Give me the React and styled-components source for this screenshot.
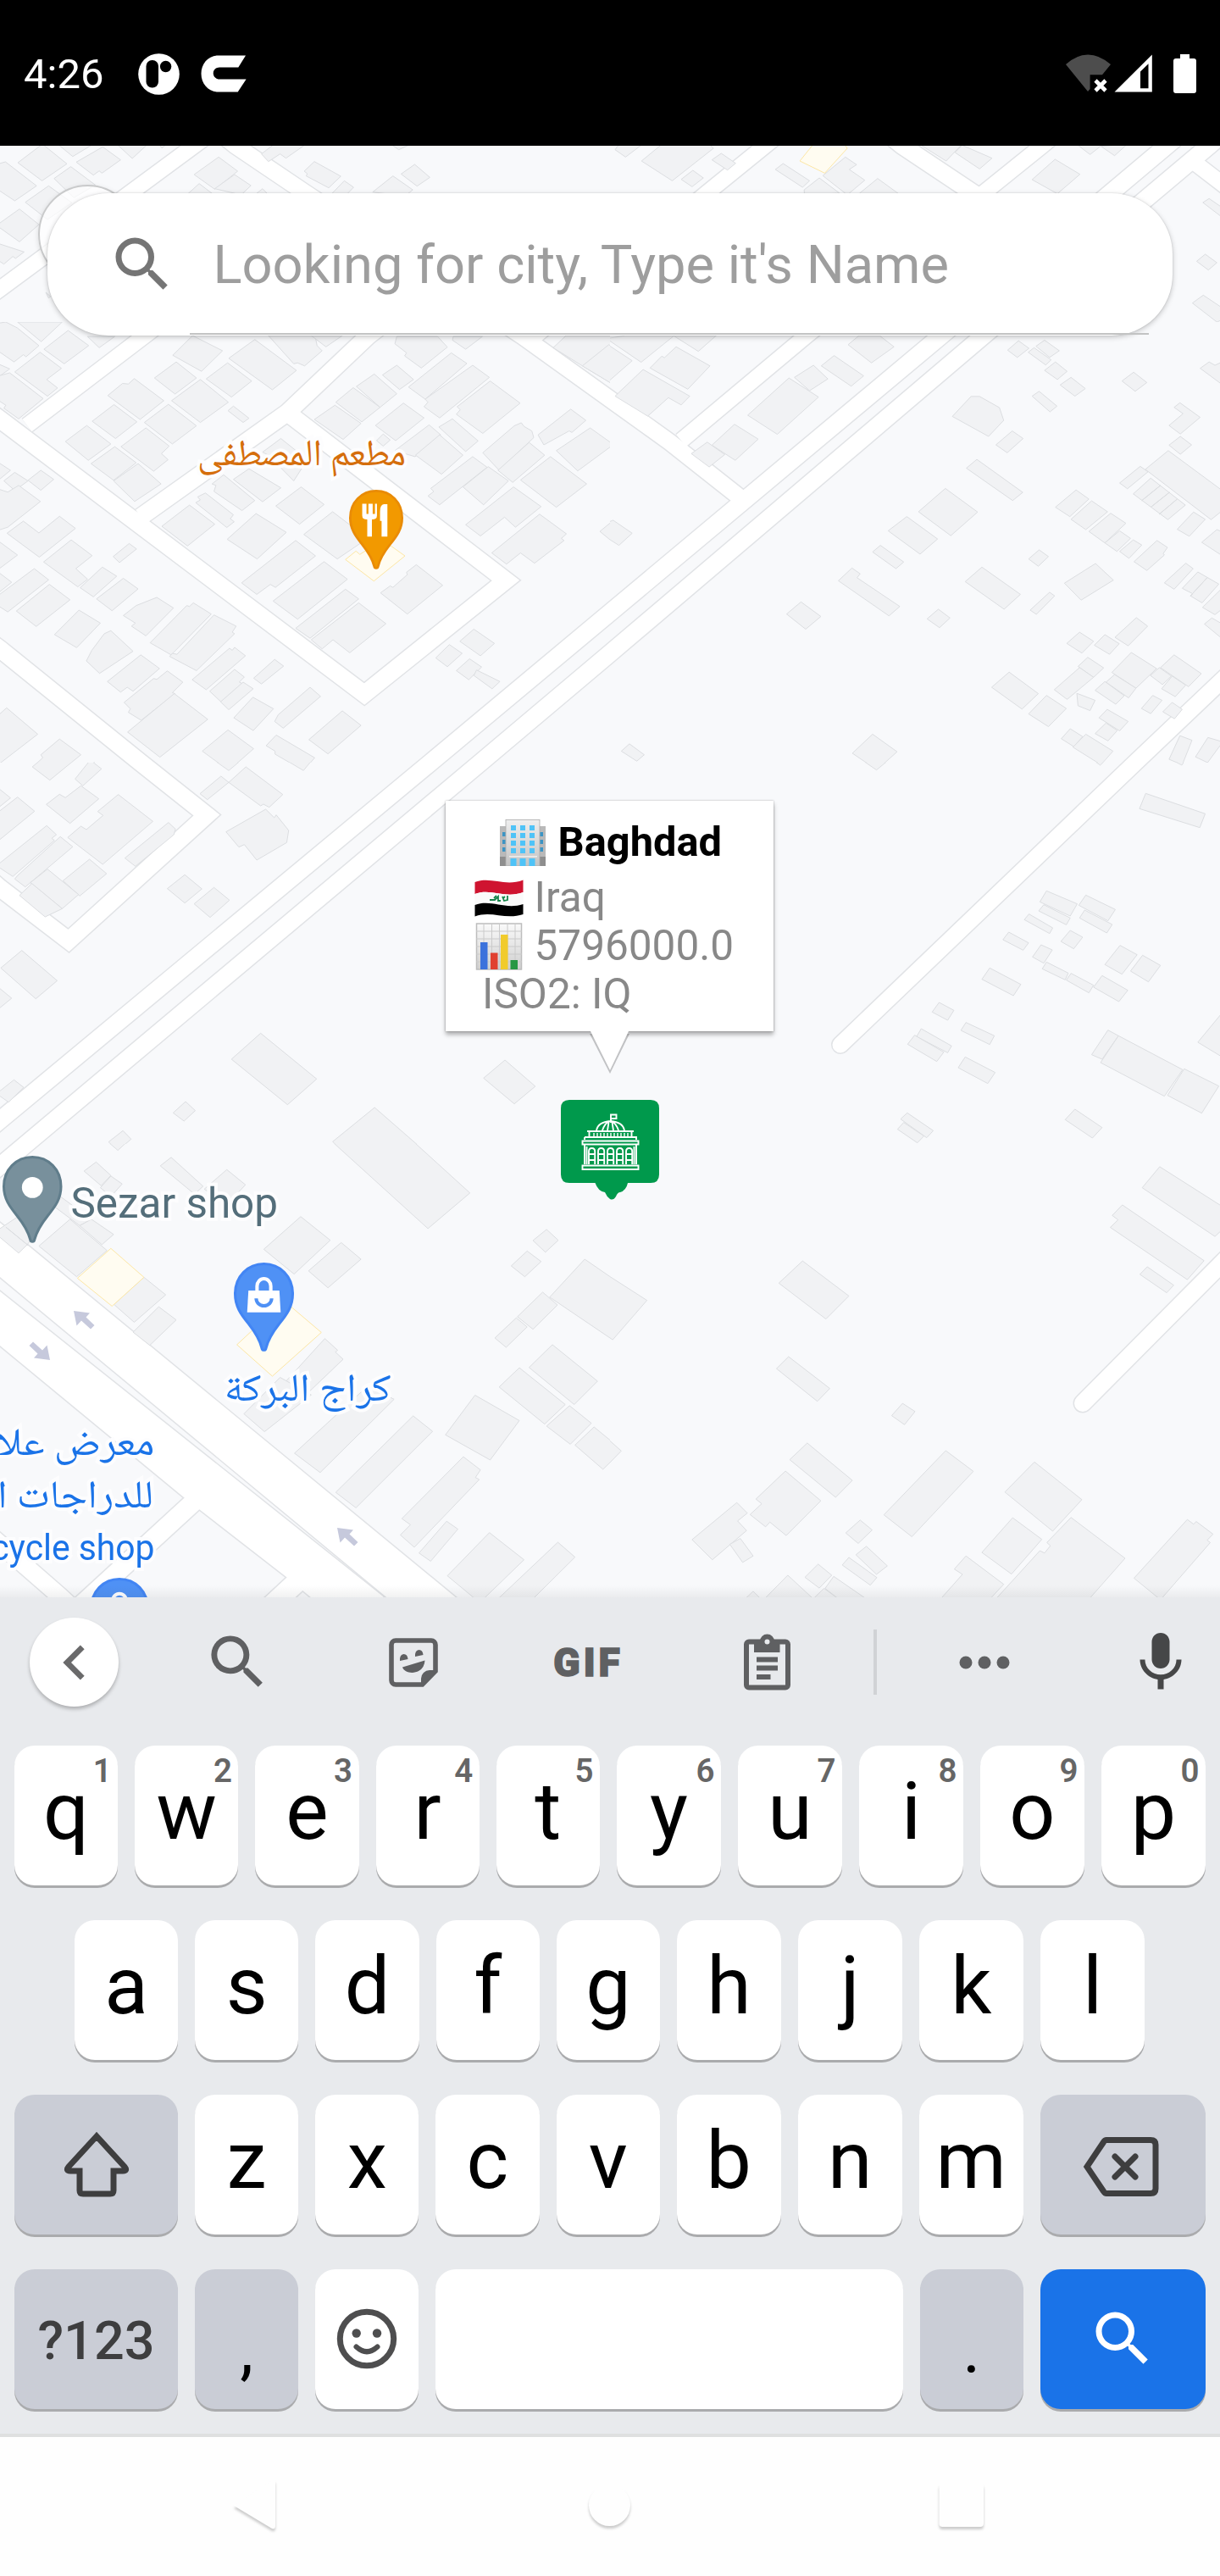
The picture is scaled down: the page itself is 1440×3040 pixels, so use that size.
import React from "react";
import styled, { createGlobalStyle } from "styled-components";

const GlobalStyle = createGlobalStyle`
  *, *::before, *::after { box-sizing: border-box; }
  html, body { margin: 0; padding: 0; background: #fefefe; }
  body { width: 1440px; font-family: Roboto, "Noto Sans", sans-serif; }
  svg { display: block; }
`;

const Screen = styled.main`
  display: flex;
  flex-direction: column;
  width: 1440px;
  height: 3040px;
  overflow: hidden;
`;

/* ---------- status bar ---------- */

const StatusBar = styled.header`
  display: flex;
  align-items: center;
  flex: none;
  height: 172px;
  padding: 2px 28px 0 28px;
  background: #000;
`;

const Clock = styled.span`
  width: 135px;
  padding-top: 2px;
  font-size: 49px;
  line-height: 58px;
  color: #fff;
`;

const StatusGroup = styled.div`
  display: flex;
  align-items: center;
  gap: ${(p) => p.$gap}px;
  margin-left: ${(p) => (p.$end ? "auto" : "0")};
`;

function StatusIcons() {
  return (
    <>
      <StatusGroup $gap={25}>
        <svg width="49" height="49" viewBox="0 0 49 49">
          <circle cx="24.5" cy="24.5" r="24.3" fill="#fff" />
          <rect x="9.5" y="8" width="14.5" height="32.5" rx="7" fill="#000" />
          <circle cx="32.6" cy="15.5" r="6.7" fill="#000" />
        </svg>
        <svg width="54" height="44" viewBox="0 0 54 44">
          <path
            d="M53 0.500H21C9 0.500 0.500 10 0.500 22s8.500 21.500 20.500 21.500h22.700L53.600 28.500H22c-4 0-7.300-3-7.300-7s3.300-7 7.300-7h22.300z"
            fill="#fff"
          />
        </svg>
      </StatusGroup>
      <StatusGroup $end $gap={0}>
        <svg width="155" height="48" viewBox="1257 62 155 48">
          <path d="M1284 107L1258 75Q1284 52 1311 75L1301 87.300H1286.600V104z" fill="#4d4d4d" />
          <path d="M1293 94l12 12M1305 94l-12 12" stroke="#fff" strokeWidth="4.600" />
          <path
            d="M1315.500 107.600L1359.800 63.500V107.600zM1346 83.500V103.300H1355.500V74.300z"
            fill="#fff"
            fillRule="evenodd"
          />
          <path
            d="M1393 63H1404V68H1409a3 3 0 0 1 3 3V106a3 3 0 0 1-3 3H1388a3 3 0 0 1-3-3V71a3 3 0 0 1 3-3H1393z"
            fill="#fff"
          />
        </svg>
      </StatusGroup>
    </>
  );
}

/* ---------- map ---------- */

const MapArea = styled.section`
  position: relative;
  flex: none;
  height: 1713px;
  overflow: hidden;
  background: #f8f9fb;

  &::after {
    content: "";
    position: absolute;
    left: 0;
    right: 0;
    bottom: 0;
    height: 14px;
    background: linear-gradient(rgba(60, 64, 67, 0), rgba(60, 64, 67, 0.07));
  }
`;

/* Roads with a centre line: [points, width, join, cap] */
const ROADS = [
  ["-40,371 0,341 229,172 270,142", 18, "miter"],
  ["232,135 278,172 361,228 617,397 720,471 791,522 872,586", 19, "miter"],
  ["375,240 171,396 32,502", 18, "miter"],
  ["520,330 435,396 339,487 166,610", 20, "miter"],
  ["-30,472 0,495 430,819 597,685 339,487", 20, "miter"],
  ["-30,744 0,766 166,900 244,962 81,1110 0,1048 -30,1022", 20, "miter"],
  ["1000,119 1065,172 1152,230", 20, "miter"],
  ["1290,122 1230,172 952,396 804,520", 18, "miter"],
  ["940,142 903,172 834,228 625,402", 18, "miter"],
  ["-40,1355 0,1322 508,900 720,723 1111,396 1377,172 1420,136", 20, "miter"],
  ["-40,1409 0,1376 567,900 720,771 1161,396 1427,172 1460,144", 20, "miter"],
  ["1405,188 1470,238", 18, "miter"],
  ["1480,768 1440,805 1340,900 992,1233", 19, "miter", "round"],
  ["1480,1453 1440,1493 1278,1656", 20, "miter", "round"],
  ["240,1762 106,1885 70,1918", 22, "miter"],
  ["-30,1796 0,1822 70,1883 110,1920", 20, "miter"],
  ["360,1858 318,1897", 24, "miter"],
];

const CARRIAGEWAYS = [
  "-10,1435 0,1443 32,1469 545,1891 460,1888 0,1507 -10,1499",
  "-10,1516 0,1524 452,1884 460,1900 385,1900 338,1861 217,1767 0,1588 -10,1580",
];

/* Building footprints, one sheet per map tile. */
const TILES = [
  {
    x: 0, y: 0, w: 720, h: 208, box: "0 516 1568 624",
    plots: [
      "109,510 172,580 108,640 46,576", "148,510 240,510 187,554", "300,510 380,510 340,561", "408,510 430,510 416,524",
      "264,520 310,566 262,613 255,605 240,620 196,574", "-9,582 14,573 94,658 38,711 -9,668", "182,590 245,655 190,700 139,632",
      "125,658 185,718 122,777 65,716", "50,740 100,795 50,856 -9,798", "-9,860 62,892 40,915 33,908 10,935 -9,918", "118,1035 130,1050 125,1055",
      "562,556 611,606 552,670 499,618", "603,618 645,657 620,690 552,668", "512,650 550,690 480,690", "675,668 690,690 655,690",
      "672,545 705,510 787,510 735,560 720,545 690,572", "1004,510 1057,510 1025,530", "808,572 876,624 845,665 787,623 790,615 782,606",
      "885,640 909,663 890,690 850,690", "1066,582 1105,628 1072,659 1031,616", "1010,623 1061,672 1045,690 1015,690 958,680",
    ],
    yards: [],
  },
  {
    x: 720, y: 0, w: 720, h: 208, box: "0 516 1568 624",
    plots: [
      "24,510 84,510 40,556 13,530", "134,510 255,510 266,525 160,640 81,570", "286,543 323,578 302,602 262,566",
      "213,603 240,630 211,661 183,635", "445,579 513,640 495,663 425,600", "605,556 634,583 615,600 655,638 610,690 547,622",
      "538,630 590,684 500,690 499,672", "688,632 742,686 640,686", "795,510 905,510 864,570", "905,514 982,560 950,598 887,540",
      "1199,510 1268,510 1234,547", "1262,518 1330,510 1297,551", "1144,564 1208,617 1150,686 1085,636",
      "1540,703 1577,738 1577,773 1524,717", "1530,900 1560,930 1538,956 1508,925", "1525,1045 1577,1093 1577,1130 1560,1140 1497,1073",
    ],
    yards: ["523,510 602,510 610,525 552,613 488,570"],
  },
  {
    x: 0, y: 208, w: 720, h: 520, box: "0 0 1568 1456",
    plots: [
      "-9,5 15,0 45,20 100,78 67,115 60,108 36,132 -9,92", "45,0 160,0 106,65", "175,28 228,78 165,138 113,90", "225,48 295,48 255,85",
      "103,100 158,153 120,190 148,218 122,245 38,165", "-9,136 25,155 -9,186", "25,168 111,253 48,320 10,285 15,275 -9,255 -9,180",
      "495,45 572,95 518,163 444,110", "655,58 762,160 700,224 588,120", "690,45 810,45 815,78 828,95 783,145 765,135 755,138",
      "800,45 880,45 838,82", "453,132 505,185 450,238 397,185", "585,135 647,195 595,248 530,188", "515,190 587,265 515,332 441,260",
      "600,278 640,318 625,332 586,293", "345,187 421,260 360,322 277,243 315,203 330,205", "293,273 352,330 297,385 237,328",
      "433,272 505,343 443,403 371,332", "223,342 285,403 227,457 168,395", "375,350 435,410 415,435 432,455 395,493 311,412",
      "295,412 350,465 292,523 234,468", "355,468 414,535 346,593 292,525", "-9,460 27,490 -9,528", "38,497 72,525 38,557 10,525",
      "105,490 138,520 105,556 72,523", "-9,550 20,562 48,540 104,593 20,678 -9,690", "60,658 100,697 153,642 194,682 101,777 18,698",
      "-9,719 45,770 -9,822", "183,720 237,772 195,815 225,850 200,875 112,793", "332,732 351,750 307,795 291,775",
      "88,815 125,852 20,958 -9,934 -9,908", "-9,822 30,860 -9,900", "263,810 300,840 240,908 206,878", "317,847 355,882 288,954 248,915",
      "127,867 180,918 93,1006 42,955", "403,910 446,945 375,1037 338,1005 348,995 317,970 350,937", "203,952 258,995 197,1076 140,1033",
      "285,1020 342,1088 256,1161 222,1120 236,1085 268,1030", "497,928 543,965 440,1100 386,1060 480,937 487,940",
      "550,968 607,1005 597,1025 603,1030 505,1152 436,1105 443,1095 455,1098", "362,1100 410,1145 342,1220 327,1207 310,1223 276,1188",
      "603,1075 631,1103 530,1215 494,1182 590,1078 597,1085", "430,1153 470,1190 443,1225 450,1228 363,1316 330,1290 335,1278 319,1257 395,1178 403,1181",
      "448,1228 534,1313 411,1438 328,1355", "603,1148 628,1173 615,1190 625,1196 568,1255 539,1220", "625,1190 651,1212 588,1281 567,1255",
      "706,1115 729,1137 672,1196 652,1177", "650,1240 703,1278 651,1350 601,1308", "797,1207 824,1237 728,1342 706,1320 715,1298",
      "880,1285 928,1333 843,1427 794,1380", "586,1348 652,1410 588,1482 520,1418", "710,1365 809,1440 780,1482 707,1428 707,1418 684,1400",
      "-9,1305 17,1275 97,1362 -9,1467", "153,1378 208,1430 129,1513 84,1470 110,1440 105,1430", "242,1455 261,1475 213,1535 193,1512",
      "722,385 790,455 755,525 690,440 675,430", "575,505 655,590 622,623 550,560 555,540 545,535", "640,485 722,548 675,594 600,520",
      "528,565 600,637 592,650 602,660 583,679 503,597 515,588 508,578", "487,605 552,668 482,740 416,675", "774,545 833,603 770,668 709,608",
      "658,633 736,695 661,783 584,718", "855,627 945,715 867,783 781,702", "760,722 811,773 708,877 695,867 660,900 621,862",
      "833,792 893,850 765,982 702,922", "888,883 922,915 797,1045 760,1012", "922,928 992,997 899,1093 856,1050 828,1080 800,1050",
      "1070,802 1138,870 1047,965 978,895 1003,872 1010,877 1047,835 1045,827",
      "1020,48 1125,48 1150,83 1083,152 1040,112 1045,102 1015,72", "1165,48 1240,48 1197,90 1163,60", "1160,102 1200,137 1093,255 1050,215",
      "1020,143 1063,190 1027,223 983,175", "962,172 1020,237 977,282 916,213", "908,217 977,282 930,330 863,265",
      "861,275 928,335 882,388 808,322", "1037,268 1090,317 1017,392 965,342", "1215,143 1258,183 1130,317 1090,280 1100,265 1093,255",
      "1260,195 1337,268 1241,368 1173,305 1183,290 1175,280", "1163,320 1229,393 1197,428 1128,347", "1103,340 1133,373 1067,445 1015,425",
      "985,370 1003,390 985,410 968,392", "1130,373 1190,440 1135,503 1068,440", "1340,333 1347,345 1367,360 1372,382 1283,490 1241,432 1322,343",
      "1360,398 1400,440 1318,530 1280,490", "1467,288 1506,325 1470,365 1463,360 1398,406 1383,373", "1517,350 1577,405 1485,492 1430,425",
      "1415,445 1508,535 1430,612 1338,522", "1215,445 1252,480 1130,604 1100,575 1115,560 1107,550", "1255,478 1307,525 1243,604 1190,545",
      "1320,545 1391,610 1325,678 1297,645 1235,707 1197,670", "1387,635 1456,700 1443,715 1450,722 1374,797 1338,763 1302,800 1264,763",
      "1455,45 1577,45 1577,207 1497,145 1422,85", "1497,145 1565,75 1577,85 1577,207", "1577,655 1542,692 1577,729",
      "1218,1015 1271,1062 1235,1103 1182,1055", "1155,1066 1188,1095 1150,1139 1120,1110", "1207,1113 1238,1140 1205,1182 1173,1152",
      "1225,1150 1285,1188 1265,1212 1218,1168",
    ],
    yards: ["915,757 925,768 965,735 1005,740 1041,773 961,856 888,785"],
  },
  {
    x: 720, y: 208, w: 720, h: 520, box: "0 0 1568 1456",
    plots: [
      "-9,55 40,45 165,45 80,133", "-9,72 57,128 -9,202", "163,45 273,45 227,97", "170,82 257,145 200,222 103,152 133,113 140,118",
      "85,157 205,245 183,274 150,250 97,311 13,245", "612,75 640,45 693,45 730,82 672,135", "576,111 652,178 620,212 543,145",
      "523,143 560,188 513,227 474,183", "460,185 536,248 430,371 354,308", "320,338 381,387 322,457 262,407", "250,397 295,438 255,479 209,435",
      "1050,62 1077,87 1047,117 1022,93", "1117,60 1155,95 1130,117 1095,80", "1090,85 1134,125 1120,142 1075,100", "1145,132 1175,163 1150,190 1117,160",
      "1185,183 1222,220 1195,245 1157,208", "1103,229 1149,278 1131,297 1085,245", "1346,166 1380,200 1350,229 1316,195",
      "928,246 950,246 1001,283 1012,325 973,378 880,312", "1034,360 1062,385 1021,432 992,406", "943,454 1061,563 1035,590 916,483",
      "862,550 945,628 876,706 793,627", "763,643 842,717 797,767 715,690", "695,738 755,793 735,815 675,760",
      "622,813 643,832 635,845 745,940 717,971 587,855", "491,925 542,973 503,1015 454,965", "956,810 1055,900 1013,949 913,858",
      "1103,753 1127,775 1101,807 1076,783", "1248,798 1294,853 1211,919 1168,863", "1130,893 1143,905 1096,966 1080,952",
      "844,949 874,978 847,1010 815,981", "8,655 57,698 23,738 -9,712 -9,664", "50,1394 88,1430 69,1451 29,1418", "675,1362 738,1420 686,1480 623,1425",
      "1198,555 1231,585 1182,643 1145,612", "1238,591 1279,627 1223,686 1185,652", "1287,632 1326,665 1272,730 1231,692",
      "1310,690 1338,715 1303,758 1272,730", "1345,720 1367,737 1334,781 1310,758", "1406,722 1433,745 1422,765 1425,770 1380,821 1347,792",
      "1363,477 1383,495 1330,551 1310,532", "1390,516 1479,605 1434,653 1345,568", "1415,540 1367,590", "1438,563 1390,612", "1458,585 1412,635",
      "1435,425 1577,560 1577,620 1545,653 1376,487", "1466,378 1495,406 1466,437 1437,407", "1465,267 1517,315 1466,370 1437,342 1473,303 1450,282",
      "1540,132 1555,143 1577,130 1577,210 1517,153", "1500,628 1530,652 1489,708 1458,685", "1560,686 1577,695 1577,775 1521,728",
      "1480,797 1499,815 1450,883 1425,862", "1511,826 1565,866 1522,928 1492,905 1498,898 1471,880", "1535,845 1492,905",
      "1577,875 1523,943 1555,967 1577,945", "1547,978 1577,1000 1577,1050 1528,998", "1353,977 1382,1005 1332,1070 1298,1042",
      "1272,1033 1309,1063 1284,1098 1245,1068", "1207,1025 1243,1055 1213,1094 1174,1062", "1340,1092 1405,1145 1352,1210 1290,1158",
      "1297,1165 1352,1210 1333,1242 1275,1190", "1272,1188 1322,1235 1300,1263 1247,1217", "1228,1108 1269,1143 1243,1174 1203,1138",
      "1207,1142 1243,1174 1175,1247 1142,1215", "1026,1157 1101,1228 1059,1279 981,1207", "1122,1234 1173,1277 1127,1337 1076,1295",
      "1200,1227 1247,1250 1234,1284 1203,1268", "1278,1280 1332,1320 1310,1351 1257,1308", "1275,1325 1304,1350 1280,1384 1247,1360",
      "1183,1344 1215,1370 1192,1403 1160,1377", "1223,1362 1293,1418 1262,1463 1190,1405", "1450,1100 1520,1162 1487,1205 1415,1142",
      "1412,1142 1443,1170 1420,1198 1389,1168", "1445,1170 1480,1200 1453,1238 1418,1212", "1395,1234 1419,1250 1390,1294 1366,1277",
      "1445,1257 1471,1280 1451,1311 1421,1288", "1465,1367 1496,1382 1471,1463 1437,1445", "1537,1373 1577,1388 1568,1400 1536,1456 1505,1437",
    ],
    yards: [],
  },
  {
    x: 0, y: 728, w: 720, h: 450, box: "0 0 1568 1350",
    plots: [
      "83,15 104,-9 191,-9 128,62", "232,-9 261,22 213,82 193,58", "550,-9 620,-9 588,28", "735,-9 802,-9 780,28", "568,48 588,70 533,131 514,110",
      "632,15 727,113 692,158 677,147 670,153 588,70", "683,165 705,195 710,185 742,240 737,283 660,345 628,290 614,299 581,245",
      "-9,85 27,125 -9,165", "45,122 89,172 -9,282 -9,180", "208,82 254,128 180,215 119,148 153,112 168,124",
      "304,113 393,208 264,360 174,265 208,225 222,237 265,187 251,173", "120,223 145,255 133,268 140,275 33,403 -9,365",
      "155,262 187,298 65,440 38,412 45,400", "433,212 451,235 447,255 348,367 321,338", "230,342 274,393 205,472 162,418",
      "122,377 202,467 160,517 78,425", "82,428 160,517 116,546 50,470", "475,397 519,447 475,497 430,446", "550,442 590,487 540,548 499,500",
      "56,665 147,772 92,836 2,727", "-9,790 30,834 -9,878", "36,1123 61,1150 22,1202 -9,1172", "670,958 814,1120 739,1211 595,1050",
      "1298,1053 1376,1146 1322,1208 1243,1117", "477,1200 502,1232 473,1269 445,1240", "316,1303 337,1333 303,1373 279,1343",
      "963,1221 1112,1400 900,1400 855,1342",
    ],
    yards: [],
  },
  {
    x: 720, y: 728, w: 720, h: 450, box: "0 0 1568 1350",
    plots: [
      "648,-9 716,-9 685,26", "1242,-9 1274,-9 1260,9", "1445,-9 1478,-9 1470,9", "1377,109 1530,181 1516,230 1361,163",
      "1122,454 1201,500 1183,543 1105,493", "1115,503 1183,550 1173,574 1102,525", "1223,469 1299,520 1280,560 1205,505",
      "1220,522 1291,573 1277,603 1207,550", "1077,536 1138,585 1130,605 1065,556", "1025,600 1076,638 1062,664 1010,627",
      "1183,594 1215,618 1192,659 1159,633", "1108,645 1137,663 1115,710 1086,688", "1122,706 1178,745 1170,769 1111,730",
      "1185,746 1243,788 1231,815 1173,770", "1265,754 1331,806 1308,846 1243,795", "1311,647 1355,680 1316,749 1272,715",
      "1369,682 1415,718 1384,776 1338,738", "976,727 1056,785 1037,825 956,767", "846,849 884,877 868,912 828,883",
      "915,920 988,967 976,998 902,948", "800,942 878,1003 868,1027 788,970", "783,965 858,1025 840,1058 765,997",
      "913,1042 990,1097 971,1136 895,1080", "1280,947 1307,967 1265,1050 1238,1034", "1307,967 1472,1087 1425,1181 1261,1062",
      "1476,1084 1565,1145 1521,1241 1433,1178", "1577,880 1511,990 1577,1045", "1195,1227 1265,1292 1240,1329 1170,1264",
      "764,1240 831,1303 814,1328 747,1262", "755,1274 807,1322 790,1346 739,1298",
    ],
    yards: [],
  },
  {
    x: 0, y: 1178, w: 720, h: 535, box: "0 0 1568 1553.600",
    plots: [
      "853,-9 1062,-9 1208,168 1100,290", "276,-9 328,-9 303,22", "247,62 285,108 260,143 216,93", "285,110 314,137 285,180 258,150",
      "440,46 522,145 500,172 412,75", "583,88 631,140 585,205 525,155", "155,180 235,258 205,280 130,205", "235,258 292,310 262,345 205,280",
      "180,258 275,365 197,455 100,350", "-9,298 45,250 90,310 70,345 48,374 -9,310", "15,285 72,347",
      "370,457 426,517 345,611 293,550", "408,558 453,603 385,690 342,645", "773,249 849,330 756,446 678,361", "877,338 928,395 843,493 793,435",
      "835,667 868,707 862,713 882,738 790,855 710,850", "720,800 800,860 680,986 627,925", "945,830 1013,875 823,1126 757,1060",
      "1062,932 1112,985 915,1247 863,1194", "1191,1072 1235,1117 1222,1143 1232,1150 1065,1382 1029,1340 1055,1305 1033,1284",
      "1148,1293 1177,1320 1107,1430 1077,1402", "1258,1332 1347,1425 1240,1563 1225,1563 1150,1480", "1434,1365 1478,1416 1367,1563 1277,1563",
      "1221,861 1335,948 1260,1083 1145,997", "1420,688 1536,813 1476,893 1360,766", "1335,767 1453,893 1400,960 1283,833",
      "1464,897 1520,957 1466,1029 1405,967", "1527,970 1600,1050 1550,1115 1478,1032", "1503,395 1577,463 1577,673 1413,525",
      "1395,508 1433,552 1370,635 1330,592", "1327,596 1355,627 1301,697 1272,665", "1355,367 1391,403 1349,455 1314,418", "1405,293 1435,330 1402,371 1370,331",
    ],
    yards: ["285,358 370,457 288,556 199,460", "750,560 826,646 700,796 609,688 680,600"],
  },
  {
    x: 720, y: 1178, w: 720, h: 535, box: "0 0 1568 1553.600",
    plots: [
      "-9,447 95,536 7,671 -9,657", "-9,1007 29,1052 -9,1104", "495,401 614,521 555,600 434,477", "459,729 565,838 533,882 428,770",
      "752,889 784,917 757,962 724,931", "507,1025 623,1153 580,1211 462,1082", "451,1121 542,1223 453,1342 411,1296 400,1312 360,1270 390,1233 375,1217",
      "326,1229 353,1265 328,1292 351,1325 263,1425 211,1356", "335,1352 368,1412 341,1434 308,1372", "643,1289 674,1323 638,1369 606,1333",
      "863,1051 934,1122 776,1346 704,1271", "1091,1090 1213,1219 1138,1327 1015,1193", "1035,1281 1110,1355 1032,1474 956,1400",
      "1185,1280 1324,1420 1230,1562 990,1562 1105,1394 1117,1402 1132,1377 1123,1366", "915,1412 1012,1509 975,1562 848,1562 906,1475 885,1457",
      "1484,1287 1500,1303 1507,1294 1550,1337 1535,1358 1543,1366 1415,1562 1347,1488", "659,1379 713,1446 685,1475 632,1408",
      "614,1417 686,1486 669,1512 597,1443", "535,1440 570,1478 538,1522 501,1485", "575,1482 662,1562 590,1562 553,1523",
      "457,1478 525,1562 395,1562", "368,1533 390,1562 345,1562", "550,1523 590,1562 520,1562", "1413,78 1577,217 1577,290 1555,317 1368,150",
      "1317,209 1527,400 1484,465 1286,286 1306,260 1291,245", "1381,421 1449,484 1431,510 1362,447",
    ],
    yards: [],
  },
];

const MapSvg = styled.svg`
  width: 1440px;
  height: 1713px;

  .edge { fill: none; stroke: #e1e3e6; }
  .edgeFill { fill: #e1e3e6; stroke: #e1e3e6; stroke-width: 3; }
  .road { fill: none; stroke: #fff; }
  .roadFill { fill: #fff; }
  .plot { fill: #f1f2f4; stroke: #dcdee1; vector-effect: non-scaling-stroke; }
  .yard { fill: #fffcf1; stroke: #fde7a5; vector-effect: non-scaling-stroke; }
  .arrow { fill: #c6c9dc; }
`;

function StreetMap() {
  return (
    <MapSvg viewBox="0 0 1440 1713">
      <g transform="translate(0 -172)">
        {ROADS.map(([pts, w, join, cap]) => (
          <polyline key={pts} className="edge" points={pts} strokeWidth={w + 3} strokeLinejoin={join} strokeLinecap={cap || "butt"} />
        ))}
        {CARRIAGEWAYS.map((pts) => <polygon key={pts} className="edgeFill" points={pts} />)}
        {ROADS.map(([pts, w, join, cap]) => (
          <polyline key={pts} className="road" points={pts} strokeWidth={w} strokeLinejoin={join} strokeLinecap={cap || "butt"} />
        ))}
        {CARRIAGEWAYS.map((pts) => <polygon key={pts} className="roadFill" points={pts} />)}
        {[[87, 1547, 0], [59, 1605, 180], [398, 1803, 0]].map(([x, y, turn]) => (
          <path key={x} className="arrow" transform={`translate(${x} ${y}) rotate(${turn})`} d="M0 0L19 2.500L14.500 7.500L24.500 17L20 21.500L9 11.500L3.500 17.500z" />
        ))}
      </g>
      {TILES.map((t) => (
        <svg key={`${t.x}-${t.y}`} x={t.x} y={t.y} width={t.w} height={t.h} viewBox={t.box} preserveAspectRatio="none">
          {t.plots.map((pts) => <polygon key={pts} className="plot" points={pts} />)}
          {t.yards.map((pts) => <polygon key={pts} className="yard" points={pts} />)}
        </svg>
      ))}
    </MapSvg>
  );
}

const Placed = styled.div`
  position: absolute;
  top: ${(p) => p.$top}px;
  left: ${(p) => p.$left}px;
`;

const PlaceLabel = styled.span`
  position: absolute;
  top: ${(p) => p.$top}px;
  right: ${(p) => 1440 - p.$right}px;
  font-family: ${(p) => (p.$arabic ? '"Noto Naskh Arabic", "Noto Sans Arabic", "DejaVu Sans", sans-serif' : "Roboto, sans-serif")};
  font-size: ${(p) => p.$size}px;
  line-height: 50px;
  white-space: nowrap;
  color: ${(p) => p.$color};
  -webkit-text-stroke: 8px #fdfdfe;
  paint-order: stroke fill;
  transform: scaleX(${(p) => p.$stretch || 1});
  transform-origin: right center;
`;

function Pin({ width, height, fill, edge, children }) {
  return (
    <svg width={width} height={height} viewBox="0 0 70 102" preserveAspectRatio="none">
      <path
        d="M35 1.500C16 1.500 1.500 16 1.500 36C1.500 50 8 59 17 70C25 80 30 88 32.500 98C33 101 37 101 37.500 98C40 88 45 80 53 70C62 59 68.500 50 68.500 36C68.500 16 54 1.500 35 1.500z"
        fill={fill} stroke={edge} strokeWidth="3"
      />
      {children}
    </svg>
  );
}

const Bag = () => (
  <>
    <path d="M17 32H53L54.500 57H15.500z" fill="#fff" />
    <path d="M27 34V27a8 8.500 0 0 1 16 0V34" fill="none" stroke="#fff" strokeWidth="4" />
    <path d="M26 41a9 8.500 0 0 0 18 0" fill="none" stroke="#4f91f5" strokeWidth="4" />
  </>
);

/* ---------- search card ---------- */

const BackDisc = styled.div`
  position: absolute;
  top: 46px;
  left: 45px;
  width: 117px;
  height: 117px;
  border: 2px solid #c9cacb;
  border-radius: 50%;
  background: rgba(255, 255, 255, 0.7);
  box-shadow: 0 2px 6px rgba(0, 0, 0, 0.12);
`;

const SearchCard = styled.div`
  position: absolute;
  top: 56px;
  left: 56px;
  display: flex;
  align-items: center;
  width: 1328px;
  height: 168px;
  padding-left: 69.500px;
  border-radius: 72px;
  background: #fff;
  box-shadow: 0 2px 6px rgba(0, 0, 0, 0.22), 0 0 2px rgba(0, 0, 0, 0.14);

  &::after {
    content: "";
    position: absolute;
    left: 168px;
    bottom: 1px;
    width: 1132px;
    height: 2px;
    background: #c2c3c3;
  }
`;

const SearchHint = styled.span`
  margin: 0 0 0 42px;
  font-size: 63.200px;
  line-height: 74px;
  white-space: nowrap;
  color: #9e9e9e;
`;

const SEARCH_PATH =
  "M15.500 14h-.79l-.28-.27A6.471 6.471 0 0 0 16 9.500 6.500 6.500 0 1 0 9.500 16c1.610 0 3.090-.59 4.230-1.570l.27.28v.79l5 4.990L20.490 19l-4.990-5zm-6 0C7.010 14 5 11.990 5 9.500S7.010 5 9.500 5 14 7.010 14 9.500 11.990 14 9.500 14z";

const Glyph = ({ d, size = 84, color = "#5f6062" }) => (
  <svg width={size} height={size} viewBox="0 0 24 24"><path d={d} fill={color} /></svg>
);

/* ---------- info window ---------- */

const InfoWindow = styled.article`
  position: absolute;
  top: 773px;
  left: 526px;
  width: 387px;
  height: 272px;
  padding: 17px 0 0 34px;
  background: #fff;
  box-shadow: 0 0 2px rgba(0, 0, 0, 0.3), 0 4px 5px rgba(0, 0, 0, 0.3);
`;

const InfoTail = styled.svg`
  position: absolute;
  top: 272px;
  left: 164px;
  overflow: hidden;
`;

const InfoTitle = styled.h2`
  display: flex;
  align-items: center;
  gap: 14.500px;
  height: 64px;
  margin: 0 0 5px 30px;
  font-size: 48.800px;
  font-weight: 700;
  line-height: 60px;
  color: #000;
`;

const InfoLine = styled.p`
  display: flex;
  align-items: center;
  gap: 12.500px;
  height: 57px;
  margin: 0;
  padding-left: ${(p) => p.$indent || 0}px;
  font-size: 49.500px;
  line-height: 57px;
  white-space: nowrap;
  color: #888;
`;

const OfficeIcon = () => (
  <svg width="54" height="55" viewBox="0 0 54 55">
    <defs>
      <linearGradient id="wall" x1="0" y1="0" x2="0" y2="1"><stop offset="0" stopColor="#eee" /><stop offset="1" stopColor="#c4c4c4" /></linearGradient>
    </defs>
    <rect y="8" width="54" height="47" fill="#b9b9b9" /><rect y="44" width="54" height="11" fill="#8e8e8e" />
    <rect x="7" y="0.500" width="40" height="54.500" fill="url(#wall)" stroke="#aaa" strokeWidth=".8" />
    {[7, 16, 25, 34].map((y) => [13, 24, 35].map((x) => <rect key={`${x}-${y}`} x={x} y={y} width="6" height="6" fill="#4fc3f7" />))}
    {[15, 24, 33].map((y) => [3, 47.500].map((x) => <rect key={`${x}-${y}`} x={x} y={y} width="3.500" height="5" fill="#3c94c4" />))}
    <rect x="11" y="43" width="33" height="1.500" fill="#eee" />
    {[12.500, 23.500, 34.500].map((x) => <rect key={x} x={x} y="46" width="7" height="9" fill="#4fc3f7" />)}
  </svg>
);

const FlagIcon = () => (
  <svg width="58" height="44" viewBox="0 0 58 44">
    <path d="M0.500 3C20-4 36 9 57.500 0.500V15C36 23 20 10 0.500 17z" fill="#cf1430" />
    <path d="M0.500 17C20 10 36 23 57.500 15V29C36 36 20 23 0.500 30z" fill="#fafafa" />
    <path d="M0.500 30C20 23 36 36 57.500 29V41C36 48 20 36 0.500 43.500z" fill="#000" />
    <path d="M18 24l6 0 4-4v5h3M33 20l2 5 4-1v-5M26 19l-3 3M36 20l-2 2" fill="none" stroke="#16864b" strokeWidth="1.800" />
  </svg>
);

const ChartIcon = () => (
  <svg width="58" height="56" viewBox="0 0 58 56">
    <defs>
      <linearGradient id="sheet" x1="0" y1="0" x2="0" y2="1"><stop offset="0" stopColor="#fafafa" /><stop offset="1" stopColor="#cfcfcf" /></linearGradient>
    </defs>
    <rect x="2.500" y="1" width="53" height="54" fill="url(#sheet)" stroke="#bdbdbd" strokeWidth="1.500" />
    <path d="M11 1V55M20.500 1V55M29.500 1V55M39 1V55M48 1V55M2 10H56M2 19H56M2 28H56M2 37H56M2 46H56" stroke="#cacaca" strokeWidth="1" />
    <rect x="7" y="23" width="8.500" height="32" fill="#3b72dc" />
    <rect x="19" y="35.500" width="8.500" height="19.500" fill="#e04030" />
    <rect x="31" y="14" width="8.500" height="41" fill="#f1cb2c" />
    <rect x="42.500" y="44" width="8.500" height="11" fill="#279744" />
  </svg>
);

const CityMarker = () => (
  <svg width="117" height="119" viewBox="662 1297 117 119">
    <path
      d="M672 1298H768Q778 1298 778 1308V1386Q778 1396 768 1396H741Q739 1405 732 1407Q729 1407 727 1412Q724 1417 720 1415Q716 1412 714 1407Q706 1406 702.500 1396H672Q662 1396 662 1386V1308Q662 1298 672 1298z"
      fill="#00994c"
    />
    <g fill="none" stroke="#fff" strokeWidth="1.900">
      <path d="M721 1325V1315.500H727.500V1320H721M704 1334Q706 1324 720.500 1323Q735 1324 737 1334M711 1334Q713 1327 719 1323M730 1334Q728 1327 722 1323M717 1334Q718 1328 718.500 1324M724 1334Q723 1328 722.500 1324" />
      <path d="M693 1335H748M695.500 1336V1341M745.500 1336V1341M690 1342H751V1345M690 1342V1345M687.500 1346.500H753.500V1350.500H687.500zM690 1351V1374M692.500 1353V1374M748.500 1353V1374M751 1351V1374" />
      <path d="M701 1341V1337M705 1341V1337M709 1341V1337M713 1341V1337M717 1341V1337M721 1341V1337M725 1341V1337M729 1341V1337M733 1341V1337M737 1341V1337M741 1341V1337" strokeWidth="1.400" />
      {[695, 706, 717, 728, 739].map((x) => (
        <path key={x} d={`M${x} 1374V1359q0-4 3.600-4t3.600 4V1374M${x} 1362h7.200M${x} 1369h7.200`} />
      ))}
      <path d="M687.500 1375.500H753.500V1380H687.500z" />
    </g>
  </svg>
);

/* ---------- keyboard ---------- */

const Keyboard = styled.section`
  flex: none;
  height: 991px;
  border-bottom: 4px solid #dfe0e0;
  background: #e8eaed;
`;

const Toolbar = styled.div`
  display: grid;
  grid-template-columns: 175px 210px 206px 207px 214px 42px 216px 170px;
  align-items: center;
  justify-items: center;
  height: 175px;
  padding-bottom: 22px;
`;

const BackButton = styled.div`
  display: flex;
  align-items: center;
  justify-content: center;
  width: 105px;
  height: 105px;
  border-radius: 50%;
  background: #fff;
  box-shadow: 0 3px 4px rgba(0, 0, 0, 0.25);
`;

const GifLabel = styled.span`
  font-size: 46px;
  font-weight: 900;
  line-height: 50px;
  letter-spacing: 4px;
  color: #5f6062;
  -webkit-text-stroke: 1.500px #5f6062;
`;

const Divider = styled.i`
  width: 4px;
  height: 77px;
  background: #d0d2d5;
`;

const MicSlot = styled.div`
  padding-left: 30px;
`;

const StickerIcon = () => (
  <svg width="58" height="58" viewBox="0 0 58 58">
    <path d="M8 3H50a5 5 0 0 1 5 5V39L39.500 55H8a5 5 0 0 1-5-5V8A5 5 0 0 1 8 3z" fill="none" stroke="#5f6062" strokeWidth="5.600" />
    <path d="M38 56V48a10 10 0 0 1 10-10H57L40 56z" fill="#5f6062" />
    <path d="M16 34.500L42.500 26.500Q42 35 35.500 38.800C28 43 18 40.500 16 34.500zM13 27Q12.500 19.500 17.500 19Q22 19 22.500 25zM31 22Q30.500 14.500 35.500 14Q40 14 40.500 20z" fill="#5f6062" />
  </svg>
);

const ClipboardIcon = () => (
  <svg width="55" height="67" viewBox="0 0 55 67">
    <rect x="3" y="9.500" width="49" height="54" rx="3" fill="none" stroke="#5f6062" strokeWidth="6" />
    <path d="M12 9H19a8.500 8.500 0 0 1 17 0H42.500V22H12z" fill="#5f6062" />
    <circle cx="27.500" cy="9.500" r="3" fill="#e8eaed" />
    <path d="M15 30.500H40M15 40.500H40M15 51H31.500" stroke="#5f6062" strokeWidth="6" />
  </svg>
);

const DotsIcon = () => (
  <svg width="60" height="16" viewBox="0 0 60 16" fill="#5f6062">
    <circle cx="8" cy="8" r="7.500" /><circle cx="30" cy="8" r="7.500" /><circle cx="52" cy="8" r="7.500" />
  </svg>
);

const MIC_PATH =
  "M12 14c1.660 0 3-1.340 3-3V5c0-1.660-1.340-3-3-3S9 3.340 9 5v6c0 1.660 1.340 3 3 3zM17.300 11c0 3-2.540 5.100-5.300 5.100S6.700 14 6.700 11H5c0 3.410 2.720 6.230 6 6.720V21h2v-3.280c3.280-.49 6-3.310 6-6.720z";

const KeyRows = styled.div`
  display: flex;
  flex-direction: column;
  gap: 41.500px;
`;

const KeyRow = styled.div`
  display: flex;
  gap: 20px;
  height: 164.500px;
  padding: 0 17px 0 ${(p) => p.$inset || 17}px;
`;

const KeyCap = styled.div`
  position: relative;
  flex: ${(p) => (p.$grow ? "1 1 0" : "0 0 auto")};
  display: flex;
  justify-content: center;
  align-items: ${(p) => (p.$icon ? "center" : "flex-start")};
  width: ${(p) => p.$width || 122.200}px;
  padding-top: ${(p) => p.$drop || 0}px;
  padding-right: ${(p) => p.$nudge || 0}px;
  border-radius: 24px;
  background: ${(p) => ({ plain: "#fff", muted: "#cacdd6", accent: "#1a73e8" })[p.$tone || "plain"]};
  box-shadow: 0 3px 0 #aaabad;
  color: ${(p) => p.$ink || "#000"};
  font-size: ${(p) => p.$size || 95}px;
  font-weight: ${(p) => p.$weight || 400};
  line-height: 112px;
`;

const KeyHint = styled.sup`
  position: absolute;
  top: 6.500px;
  right: 7.500px;
  font-size: 38.500px;
  font-weight: 600;
  line-height: 46px;
  color: #666;
`;

/* Keys on the right half of the board are a touch wider. */
function Letters({ chars, narrow, hints }) {
  return [...chars].map((c, i) => (
    <KeyCap key={c} $drop={22} $width={i < narrow ? 122.200 : 123}>
      {c}
      {hints && <KeyHint>{(i + 1) % 10}</KeyHint>}
    </KeyCap>
  ));
}

const ShiftIcon = () => (
  <svg width="80" height="77" viewBox="0 0 80 77">
    <path d="M40 5L7 41Q3 46 9 46H20V69Q20 73 24 73H56Q60 73 60 69V46H71Q77 46 73 41z" fill="none" stroke="#3e3e3f" strokeWidth="7" />
  </svg>
);

const BackspaceIcon = () => (
  <svg width="90" height="72" viewBox="0 0 90 72" fill="none" stroke="#3e3e3f" strokeWidth="7">
    <path d="M28 4.500H80Q86 4.500 86 10V62Q86 67.500 80 67.500H28Q26 67.500 24.500 65L5 36L24.500 7Q26 4.500 28 4.500z" />
    <path d="M38 24L62 48M62 24L38 48" strokeLinecap="round" />
  </svg>
);

const SmileIcon = () => (
  <svg width="72" height="72" viewBox="0 0 72 72">
    <circle cx="36" cy="36" r="31.700" fill="none" stroke="#4e4e4f" strokeWidth="7" />
    <circle cx="23.700" cy="29.500" r="5.200" fill="#4e4e4f" /><circle cx="48" cy="29.500" r="5.200" fill="#4e4e4f" />
    <path d="M23.500 45.500Q36 57 48.500 45.500" fill="none" stroke="#4e4e4f" strokeWidth="6" strokeLinecap="round" />
  </svg>
);

const NavBar = styled.nav`
  flex: 1;
  background: #fefefe;

  svg { filter: drop-shadow(0 3.500px 1.500px rgba(0, 0, 0, 0.2)); }
`;

export default function App() {
  return (
    <Screen>
      <GlobalStyle />
      <StatusBar>
        <Clock>4:26</Clock>
        <StatusIcons />
      </StatusBar>

      <MapArea>
        <StreetMap />
        <PlaceLabel $arabic $top={343} $right={479} $size={44} $color="#d56e0c" dir="rtl">مطعم المصطفى</PlaceLabel>
        <PlaceLabel $top={1223} $right={328} $size={49.400} $color="#546e7a">Sezar shop</PlaceLabel>
        <PlaceLabel $arabic $top={1446} $right={462} $size={46} $stretch={1.090} $color="#1a73e8" dir="rtl">كراج البركة</PlaceLabel>
        <PlaceLabel $arabic $top={1510} $right={182} $size={46} $stretch={1.090} $color="#1a73e8" dir="rtl">معرض علا</PlaceLabel>
        <PlaceLabel $arabic $top={1572} $right={181} $size={46} $stretch={1.090} $color="#1a73e8" dir="rtl">للدراجات ا</PlaceLabel>
        <PlaceLabel $top={1629} $right={183} $size={43} $stretch={0.950} $color="#1a73e8">cycle shop</PlaceLabel>

        <Placed $top={406} $left={411.500}>
          <Pin width={64} height={94} fill="#f29900" edge="#e98b06">
            <path d="M17 18V33q0 5 6.500 5V60H29.500V38q6.500 0 6.500-5V18H33.500V31H30.500V18H25V31H22.500V18zM42 60V40H40V28q0-9 5-9.500H49.500V60z" fill="#fff" />
          </Pin>
        </Placed>
        <Placed $top={1192} $left={3}>
          <Pin width={70.500} height={103} fill="#78909c" edge="#607d8b">
            <circle cx="35" cy="37" r="12.300" fill="#fff" />
          </Pin>
        </Placed>
        <Placed $top={1318} $left={275.500}>
          <Pin width={71} height={105} fill="#4f91f5" edge="#4285f4"><Bag /></Pin>
        </Placed>
        <Placed $top={1690} $left={105.500}>
          <Pin width={70} height={103} fill="#4f91f5" edge="#4285f4"><Bag /></Pin>
        </Placed>
        <Placed $top={1125} $left={662}><CityMarker /></Placed>

        <InfoWindow>
          <InfoTitle><OfficeIcon />Baghdad</InfoTitle>
          <InfoLine><FlagIcon />Iraq</InfoLine>
          <InfoLine><ChartIcon />5796000.0</InfoLine>
          <InfoLine $indent={9}>ISO2: IQ</InfoLine>
          <InfoTail width="60" height="58" viewBox="0 0 60 58">
            <path d="M6 3L30 50L53 3z" fill="rgba(0,0,0,0.22)" />
            <path d="M7 0L30 46L52 0z" fill="#fff" />
          </InfoTail>
        </InfoWindow>

        <BackDisc />
        <SearchCard>
          <Glyph d={SEARCH_PATH} color="#757575" />
          <SearchHint>Looking for city, Type it's Name</SearchHint>
        </SearchCard>
      </MapArea>

      <Keyboard>
        <Toolbar>
          <BackButton><Glyph size={82} color="#6a6a6b" d="M15.410 7.410L14 6l-6 6 6 6 1.410-1.410L10.830 12z" /></BackButton>
          <Glyph d={SEARCH_PATH} size={83} />
          <StickerIcon />
          <GifLabel>GIF</GifLabel>
          <ClipboardIcon />
          <Divider />
          <DotsIcon />
          <MicSlot><Glyph d={MIC_PATH} color="#464748" /></MicSlot>
        </Toolbar>
        <KeyRows>
          <KeyRow>
            <Letters chars="qwertyuiop" narrow={5} hints />
          </KeyRow>
          <KeyRow $inset={88}>
            <Letters chars="asdfghjkl" narrow={5} />
          </KeyRow>
          <KeyRow>
            <KeyCap $width={193} $icon $tone="muted"><ShiftIcon /></KeyCap>
            <Letters chars="zxcvbnm" narrow={4} />
            <KeyCap $width={195} $icon $tone="muted" $drop={6} $nudge={4}><BackspaceIcon /></KeyCap>
          </KeyRow>
          <KeyRow>
            <KeyCap $width={193} $tone="muted" $size={63} $weight={500} $ink="#3e3e3f" $drop={29}>?123</KeyCap>
            <KeyCap $tone="muted" $size={80} $drop={39}>,</KeyCap>
            <KeyCap $icon><SmileIcon /></KeyCap>
            <KeyCap $grow />
            <KeyCap $tone="muted" $size={80} $drop={39}>.</KeyCap>
            <KeyCap $width={195} $icon $tone="accent" $nudge={2}><Glyph d={SEARCH_PATH} color="#fff" /></KeyCap>
          </KeyRow>
        </KeyRows>
      </Keyboard>

      <NavBar>
        <svg width="1440" height="164" viewBox="0 2876 1440 164" fill="#fefefe">
          <path d="M276 2957L322 2927Q325 2926 325 2929V2981Q325 2985 321 2984z" />
          <circle cx="719.500" cy="2956.500" r="24.500" />
          <rect x="1108.500" y="2931" width="52.500" height="51" rx="4" />
        </svg>
      </NavBar>
    </Screen>
  );
}
